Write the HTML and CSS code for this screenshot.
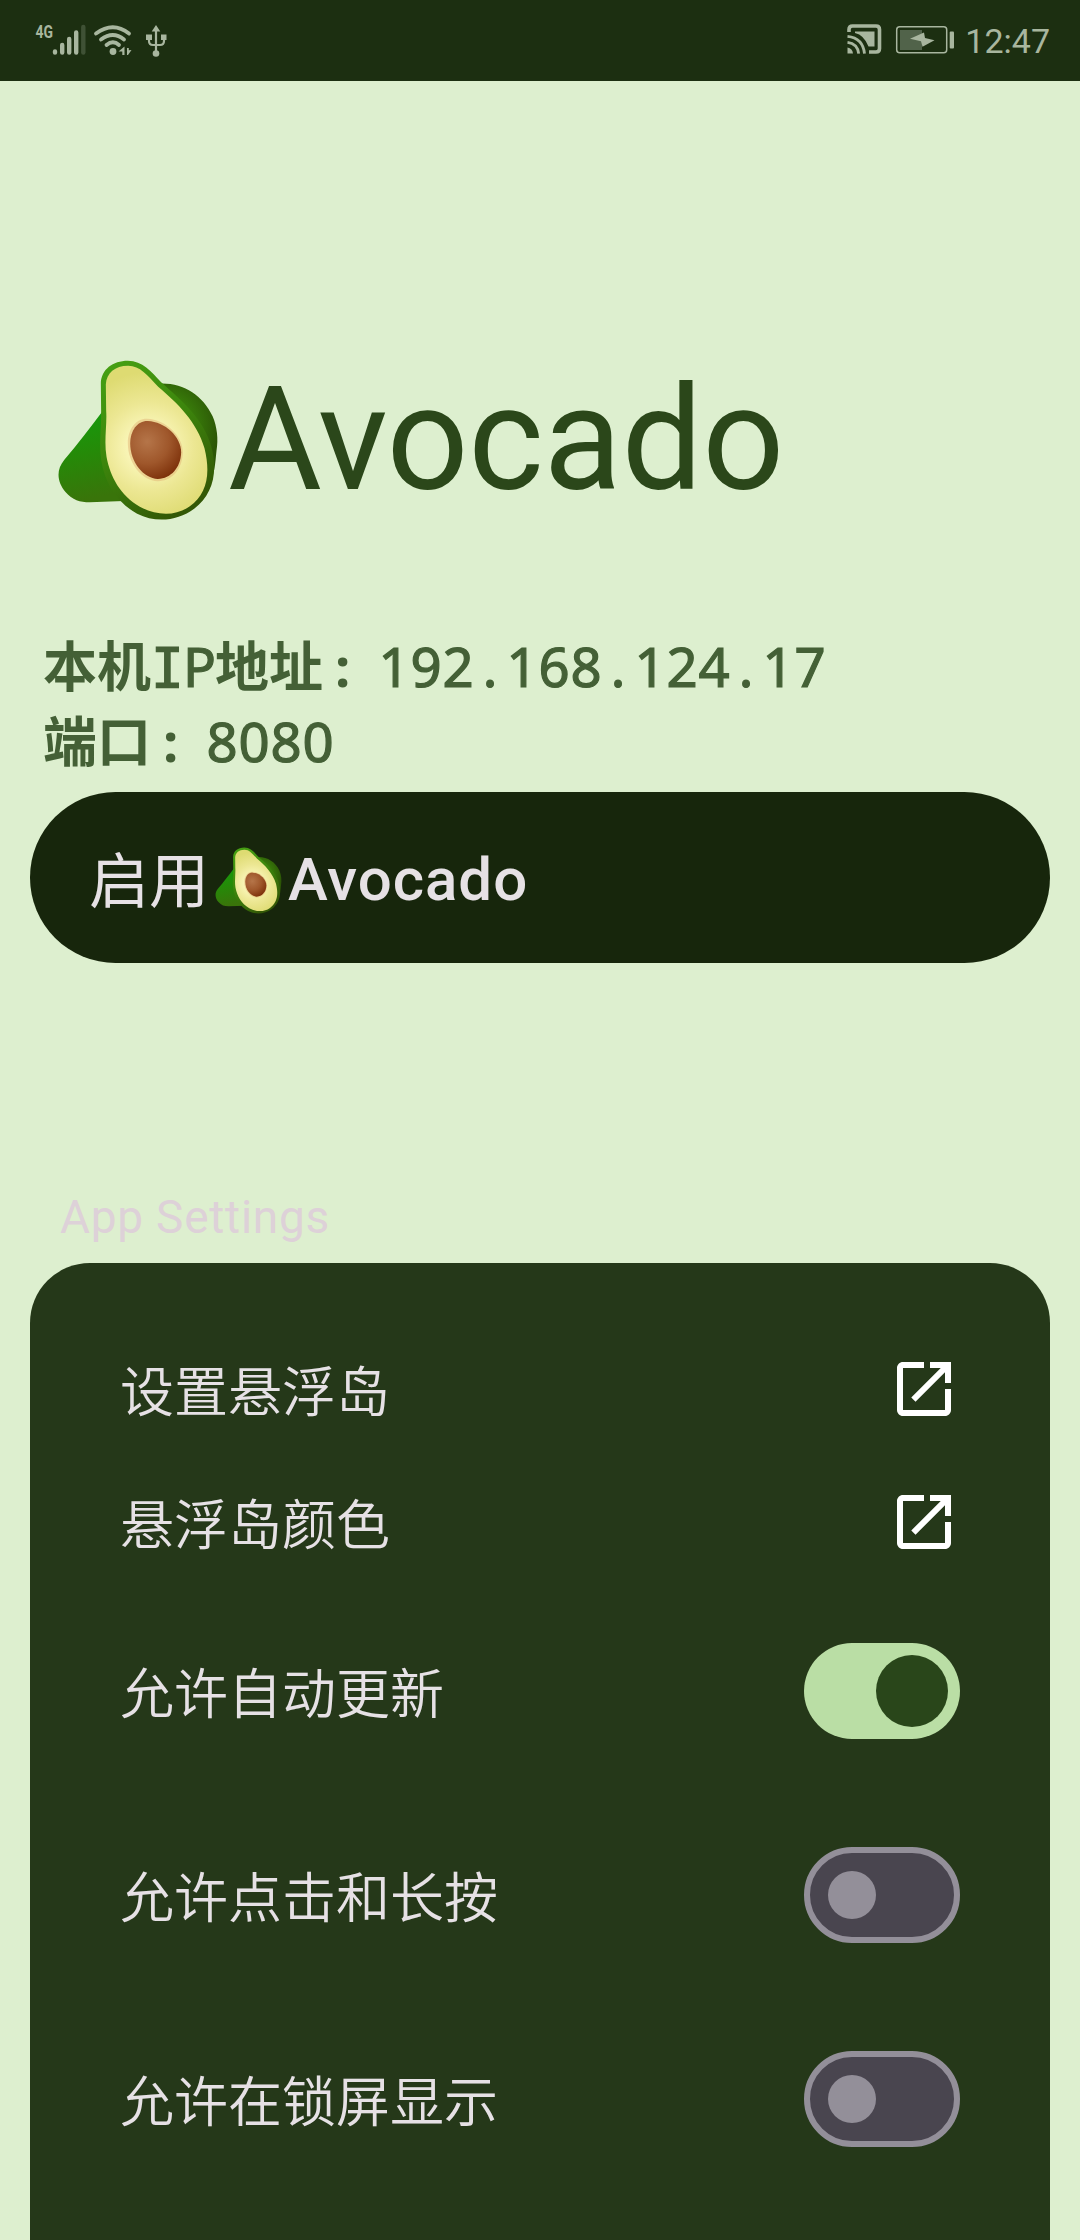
FILE: index.html
```html
<!DOCTYPE html>
<html lang="zh-CN">
<head>
<meta charset="utf-8">
<title>Avocado</title>
<link rel="stylesheet" href="styles.css">
</head>
<body>
<svg class="defs" width="0" height="0" aria-hidden="true">
  <defs>
    <linearGradient id="backSkin" x1="0" y1="0" x2="0.2" y2="1"><stop offset="0" stop-color="#149c0d"/><stop offset="0.5" stop-color="#258a08"/><stop offset="1" stop-color="#39740a"/></linearGradient>
    <radialGradient id="rightSkin" gradientUnits="userSpaceOnUse" cx="400" cy="260" r="165"><stop offset="0" stop-color="#3d9a0b"/><stop offset="0.55" stop-color="#387b0a"/><stop offset="1" stop-color="#2c5606"/></radialGradient>
    <linearGradient id="frontSkin" x1="0.1" y1="0" x2="0.6" y2="1"><stop offset="0" stop-color="#46a013"/><stop offset="0.5" stop-color="#3c850c"/><stop offset="1" stop-color="#335806"/></linearGradient>
    <radialGradient id="flesh" gradientUnits="userSpaceOnUse" cx="355" cy="320" r="225"><stop offset="0.3" stop-color="#f8f4b4"/><stop offset="0.6" stop-color="#ece793"/><stop offset="1" stop-color="#dedb72"/></radialGradient>
    <radialGradient id="pit" gradientUnits="userSpaceOnUse" cx="350" cy="305" r="120"><stop offset="0" stop-color="#b57549"/><stop offset="0.55" stop-color="#9f572b"/><stop offset="1" stop-color="#7d310a"/></radialGradient>
    <symbol id="avocado" viewBox="80 60 485 480">
      <path fill="url(#backSkin)" d="M215 215C180 262 143 310 101 360C75 392 81 428 105 456C126 480 148 487 178 487L300 482L330 240Z"/>
      <path fill="url(#rightSkin)" d="M370 132C447 121 515 160 546 228C560 260 564 298 558 332C556 350 555 370 551 390L430 330Z"/>
      <path fill="url(#frontSkin)" d="M211 130C212 88 247 62 292 62C337 63 361 93 392 127C451 180 518 235 542 318C564 397 546 465 491 506C442 543 375 549 320 521C265 492 223 433 212 360C205 313 212 270 212 225Z"/>
      <path fill="url(#flesh)" d="M226 133C228 99 253 77 293 77C329 77 350 105 383 140C440 188 500 246 522 325C542 407 527 462 478 499C433 531 375 526 328 500C270 467 239 410 228 350C220 303 230 254 227 212Z"/>
      <path fill="#e0b070" opacity=".45" d="M350 236C405 238 458 288 457 337C456 387 426 423 382 424C335 422 292 371 292 309C292 267 317 235 350 236Z"/>
      <path fill="url(#pit)" d="M352 243C403 245 452 290 452 337C451 383 421 416 382 417C339 415 299 367 299 309C300 271 321 242 352 243Z"/>
    </symbol>
    <symbol id="open" viewBox="0 0 24 24">
      <path d="M19 19H5V5h7V3H5c-1.11 0-2 .9-2 2v14c0 1.1.89 2 2 2h14c1.1 0 2-.9 2-2v-7h-2v7zM14 3v2h3.59l-9.83 9.83 1.41 1.41L19 6.41V10h2V3h-7z"/>
    </symbol>
  </defs>
</svg>

<header class="status">
  <svg class="status-left" viewBox="0 0 200 81" width="200" height="81">
    <text class="net" x="35.5" y="38" textLength="17.5" lengthAdjust="spacingAndGlyphs">4G</text>
    <g stroke-width="4.4" stroke-linecap="round">
      <path d="M55 51.5v1M62.2 45v7.5M69.2 39v13.5M76.2 32.5v20"/>
      <path d="M83.3 27v25.500" opacity=".25"/>
      <path d="M96 33.500Q113 21 129 33.500M101 39.500Q113 30.500 124 39.500M106.500 45Q113 39.500 119 45" fill="none" stroke-width="3.800"/>
    </g>
    <circle cx="113" cy="51.500" r="3.400"/>
    <path class="plain" d="M118.500 51.500l6-5v8.500h-2.200v-3.500zM127 48h1.800v2.200l2.700-.2-3.500 5h-1z"/>
    <g stroke-width="2.200" fill="none"><path d="M156 30v23M149 39v2q0 4 4 4h7q4 0 4-4v-2"/></g>
    <path class="plain" d="M156 25l4.300 6.500h-8.600zM146 34.500h6v5.500h-6zM161 34.500h5.500v5.500h-5.500z"/>
    <circle cx="156" cy="53.500" r="3.300"/>
  </svg>
  <div class="status-right">
    <svg viewBox="0 0 112 32" width="112" height="32">
      <path d="M3 8V5.500Q3 2 6.500 2H30Q33.500 2 33.500 5.500V24.500Q33.500 28 30 28H23" fill="none" stroke-width="3.600"/>
      <path class="plain" d="M9 7.500H28.500V22.500H22.500Q18 11 9 9z"/>
      <path class="plain" d="M1.500 23.500q5 1 5.500 6h-5.500z"/>
      <path d="M1.500 18.300q10 1.200 11.200 11.300M1.500 12.300q15.500 1.700 17 17.300" fill="none" stroke-width="2.800"/>
      <rect x="50.700" y="2.700" width="50" height="26" rx="3" fill="none" stroke-width="1.500"/>
      <rect class="charge" x="54" y="6" width="22" height="20"/>
      <path class="plain" d="M64 14.800l14-6.300 1 5.500 9.500 2.200-12 6.500-1.500-5.500z"/>
      <rect class="plain" x="103.700" y="7.500" width="4.300" height="17" rx="1"/>
    </svg>
    <time class="clock">12:47</time>
  </div>
</header>

<main class="screen">
  <h1 class="brand">
    <svg class="brand-icon"><use href="#avocado"/></svg>
    <span>Avocado</span>
  </h1>

  <section class="network">
    <p class="line"><span class="cjk">本机</span><span class="cell serif-i">I</span><span class="cell">P</span><span class="cjk">地址</span><span class="colon">:</span><span class="cell">1</span><span class="cell">9</span><span class="cell">2</span><span class="cell">.</span><span class="cell">1</span><span class="cell">6</span><span class="cell">8</span><span class="cell">.</span><span class="cell">1</span><span class="cell">2</span><span class="cell">4</span><span class="cell">.</span><span class="cell">1</span><span class="cell">7</span></p>
    <p class="line"><span class="cjk">端口</span><span class="colon">:</span><span class="cell">8</span><span class="cell">0</span><span class="cell">8</span><span class="cell">0</span></p>
  </section>

  <button class="enable" type="button">
    <span class="enable-cjk">启用</span>
    <svg class="enable-icon"><use href="#avocado"/></svg>
    <span class="enable-name">Avocado</span>
  </button>

  <h2 class="caption">App Settings</h2>
  <section class="card">
    <div class="row"><span>设置悬浮岛</span><svg class="open"><use href="#open"/></svg></div>
    <div class="row"><span>悬浮岛颜色</span><svg class="open"><use href="#open"/></svg></div>
    <div class="row tall"><span>允许自动更新</span><span class="switch on"><span class="thumb"></span></span></div>
    <div class="row tall"><span>允许点击和长按</span><span class="switch"><span class="thumb"></span></span></div>
    <div class="row tall"><span>允许在锁屏显示</span><span class="switch"><span class="thumb"></span></span></div>
  </section>
</main>
</body>
</html>
```
FILE: styles.css
```css
* { box-sizing: border-box; }

body {
  margin: 0;
  width: 1080px;
  height: 2240px;
  overflow: hidden;
  display: flex;
  flex-direction: column;
  background: #ddefcf;
  font-family: Roboto, "Noto Sans CJK SC", sans-serif;
}

h1, h2, p { margin: 0; font-weight: 400; }
.defs { position: absolute; }

.status {
  flex: none;
  height: 81px;
  display: flex;
  justify-content: space-between;
  background: #1c2f11;
  color: #a8b69f;
}
.status svg { fill: #a8b69f; stroke: #a8b69f; }
.status .plain, .status circle, .status .net { stroke: none; }
.status .charge { fill: #51634a; stroke: none; }
.net { font: 700 18.5px Roboto, sans-serif; }
.status-right {
  display: flex;
  align-items: center;
  gap: 7px;
  padding-right: 30px;
}
.status-right svg { margin-top: -1px; }
.clock { font-size: 34px; line-height: 40px; }

.screen {
  flex: 1;
  min-height: 0;
  display: flex;
  flex-direction: column;
  padding: 274px 30px 0;
}

.brand {
  display: flex;
  align-items: center;
  gap: 9px;
  height: 169px;
  padding-left: 27px;
  color: #2b471a;
  font-size: 144px;
  line-height: 169px;
  letter-spacing: -0.3px;
}
.brand-icon { width: 162px; height: 160px; }

.network {
  height: 150px;
  margin: 102px 0 16px;
  padding-left: 13px;
  color: #446036;
}
.line {
  display: flex;
  align-items: baseline;
  height: 75px;
  font: 400 54.500px/75px "Noto Sans", sans-serif;
}
.cell {
  width: 32px;
  text-align: center;
  -webkit-text-stroke: 1.200px #446036;
}
.cjk { font: 700 54px/75px "Noto Sans CJK SC", sans-serif; }
.serif-i { font-family: "DejaVu Sans Mono", monospace; }
.colon { width: 55px; padding-left: 12px; font-weight: 700; }

.enable {
  display: flex;
  align-items: center;
  height: 171px;
  padding: 4px 59px 0;
  border: 0;
  border-radius: 86px;
  background: #17260c;
  color: #e6e1e5;
  font: 500 60px/72px Roboto, sans-serif;
}
.enable-cjk { margin-top: -5px; font: 400 60px/72px "Noto Sans CJK SC", sans-serif; }
.enable-icon { width: 67px; height: 67px; margin: 1px 6px 0; }
.enable-name { letter-spacing: 1px; }

.caption {
  margin-top: 227px;
  padding-left: 30px;
  height: 73px;
  color: #ddd1d8;
  font-size: 46px;
  line-height: 54px;
  letter-spacing: 0.75px;
}

.card {
  flex: 1;
  padding: 59px 90px 0;
  border-radius: 60px 60px 0 0;
  background: #253819;
  color: #e6e1e5;
}
.row {
  display: flex;
  align-items: center;
  justify-content: space-between;
  height: 133px;
  font: 350 54px/78px "Noto Sans CJK SC", sans-serif;
}
.tall { height: 204px; }
.row + .tall:nth-child(3) { margin-top: 1px; }
.open { width: 72px; height: 72px; fill: #fff; }

.switch {
  display: flex;
  align-items: center;
  width: 156px;
  height: 96px;
  padding: 0 18px;
  border: 6px solid #938f99;
  border-radius: 48px;
  background: #49454f;
}
.thumb { width: 48px; height: 48px; border-radius: 50%; background: #938f99; }
.on { justify-content: flex-end; padding: 0 12px; border: 0; background: #badea5; }
.on .thumb { width: 72px; height: 72px; background: #29461a; }
```
